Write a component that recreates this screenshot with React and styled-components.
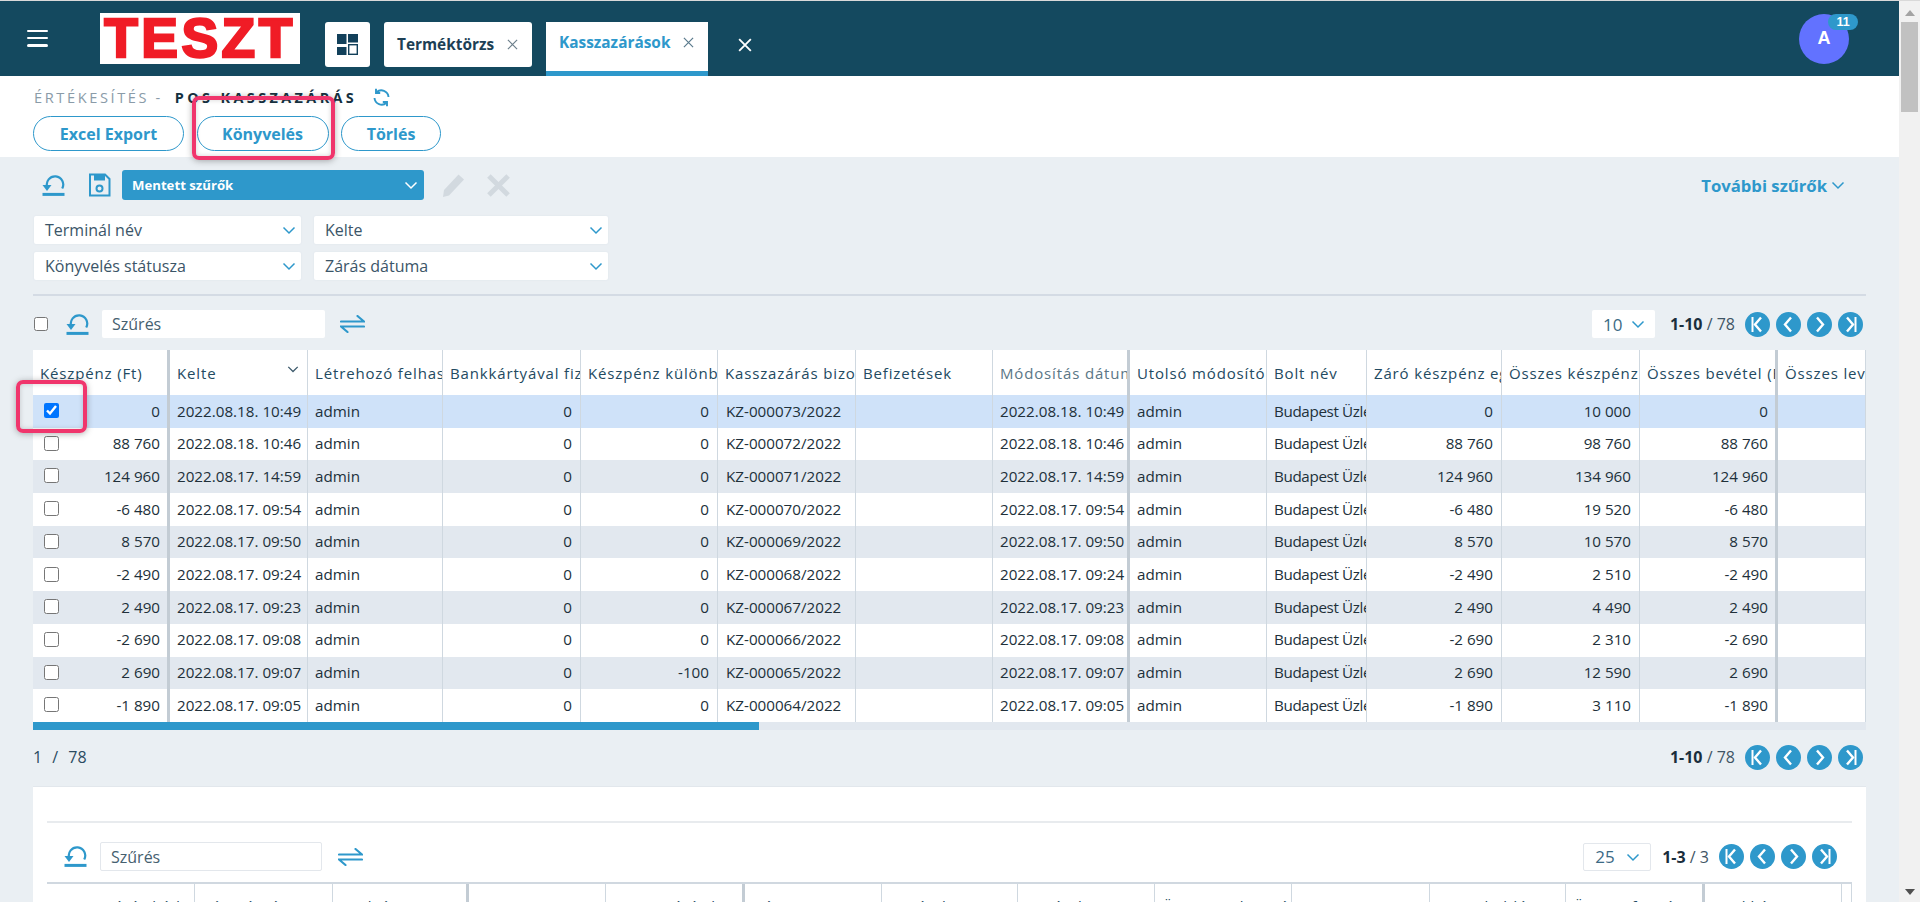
import React from "react";
import styled, { createGlobalStyle } from "styled-components";

const Global = createGlobalStyle`
  html, body { margin: 0; padding: 0; height: 902px; overflow: hidden; background: #eaeff3; }
  body { font-family: "Open Sans", "Noto Sans", sans-serif; color: #1d3f55; }
  * { box-sizing: border-box; }
`;
const BLUE = "#2e98cb";

const Page = styled.div`display: flex; width: 1920px; height: 902px; position: relative; border-top: 1px solid #d9d9d9; overflow: hidden;`;
const Main = styled.div`width: 1899px; height: 901px; display: flex; flex-direction: column; overflow: hidden;`;
const Rail = styled.div`width: 21px; background: #f1f1f1; display: flex; flex-direction: column; align-items: center; padding-top: 9px; padding-bottom: 7px;`;
const RailArrow = styled.div`
  width: 0; height: 0; border-left: 5px solid transparent; border-right: 5px solid transparent;
  ${p => p.$down ? "border-top: 6px solid #505050; margin-top: auto;" : "border-bottom: 6px solid #a3a3a3;"}
`;
const RailThumb = styled.div`width: 17px; height: 90px; background: #c1c1c1; margin-top: 6px;`;

const Header = styled.header`height: 75px; flex: none; background: #14495f; display: flex; align-items: center; padding: 0 50px 0 27px;`;
const Burger = styled.button`width: 21px; height: 17px; padding: 0; border: 0; background: none; display: flex; flex-direction: column; justify-content: space-between; margin-top: -1px;
  span { display: block; height: 2.5px; background: #fff; border-radius: 2px; }`;
const Logo = styled.div`width: 200px; height: 51px; margin-left: 52px; background: #fff; display: flex; align-items: center; justify-content: center;
  color: #f01c26; font: 700 55px/51px "Liberation Sans", Arial, sans-serif; letter-spacing: 3.5px; -webkit-text-stroke: 2.4px #f01c26; overflow: hidden;`;
const TabBar = styled.nav`align-self: stretch; padding-top: 21px; margin-left: 25px; display: flex; align-items: flex-start; gap: 14px;`;
const DashBtn = styled.button`width: 45px; height: 45px; border: 0; padding: 0; background: #fff; border-radius: 3px; display: flex; align-items: center; justify-content: center;`;
const Tab = styled.div`
  height: ${p => p.$active ? "54px" : "45px"};
  padding-bottom: ${p => p.$active ? "9px" : "0"};
  width: ${p => p.$w}px; background: #fff; border-radius: ${p => p.$active ? "0" : "3px"};
  border-bottom: ${p => p.$active ? `5px solid ${BLUE}` : "0"};
  display: flex; align-items: center; justify-content: space-between; padding-left: 13px; padding-right: 14px;
  font-size: 15.4px; font-weight: 700; color: ${p => p.$active ? BLUE : "#1d3f55"};
  svg { flex: none; }
`;
const CloseAll = styled.button`width: 16px; height: 45px; border: 0; background: none; padding: 0; margin-left: 16px; display: flex; align-items: center;`;
const Avatar = styled.div`margin-left: auto; width: 50px; height: 50px; border-radius: 50%; background: #6272ff; color: #fff; font: 700 18px "Liberation Sans", sans-serif; display: flex; align-items: center; justify-content: center; position: relative;`;
const Badge = styled.span`position: absolute; left: 29px; top: 0; width: 30px; height: 16px; border-radius: 8px; background: ${BLUE}; font: 700 12.5px/16px "Liberation Sans", sans-serif; text-align: center;`;

const SubBar = styled.section`height: 81px; flex: none; background: #fff; padding: 10px 0 0 33px;`;
const Crumbs = styled.div`height: 22px; display: flex; align-items: center; margin-bottom: 8px; padding-left: 1px; white-space: nowrap;`;
const CrumbGrey = styled.span`font-size: 14.6px; letter-spacing: 2.6px; color: #8a9ba8; margin-right: 12px;`;
const CrumbDark = styled.span`font-size: 14.4px; font-weight: 700; letter-spacing: 3.4px; color: #14303f; margin-right: 15px;`;
const PillRow = styled.div`display: flex; gap: 12.5px;`;
const Pill = styled.button`width: ${p => p.$w}px; height: 35px; background: #fff; border: 1.5px solid ${BLUE}; border-radius: 18px; color: ${BLUE}; font: 700 16px "Open Sans", sans-serif; padding: 0;`;

const Filters = styled.section`flex: 1; padding: 13px 33px 0; display: flex; flex-direction: column;`;
const SavedRow = styled.div`height: 30px; flex: none; display: flex; align-items: center; padding-left: 9px;`;
const IconSlot = styled.span`display: inline-flex; margin-right: ${p => p.$mr ?? 0}px;`;
const SavedSelect = styled.div`width: 302px; height: 30px; background: ${BLUE}; border-radius: 3px; color: #fff; font-size: 13.2px; font-weight: 700; display: flex; align-items: center; justify-content: space-between; padding: 0 6px 0 10px; margin-right: 18px;`;
const More = styled.div`margin-left: auto; margin-right: 21px; display: flex; align-items: center; gap: 4px; color: ${BLUE}; font-size: 16.7px; font-weight: 700;`;
const SelectGrid = styled.div`display: grid; grid-template-columns: 267px 294px; column-gap: 13px; row-gap: 8px; margin-top: 16px; padding-left: 1px;`;
const Select = styled.div`height: 28px; background: #fff; border-radius: 2px; box-shadow: 0 0 2px #dde3e9; font-size: 16px; color: #3b5568; display: flex; align-items: center; justify-content: space-between; padding: 0 5px 0 11px;`;
const Divider = styled.hr`margin: 14px 0 0; border: 0; border-top: 2px solid #d4dbe4; height: 0;`;

const ListBar = styled.div`height: 28px; flex: none; margin-top: ${p => p.$mt}px; display: flex; align-items: center; padding-left: ${p => p.$pl}px; padding-right: ${p => p.$pr}px;`;
const Search = styled.div`width: ${p => p.$w ?? 223}px; height: ${p => p.$h ?? 28}px; background: #fff; border-radius: 2px; border: ${p => p.$line ? "1px solid #e3e7ec" : "0"}; font-size: 16px; color: #46606f; display: flex; align-items: center; padding-left: 10px; margin-right: ${p => p.$mr ?? 15}px;`;
const PagerWrap = styled.div`margin-left: auto; display: flex; align-items: center;`;
const PageSize = styled.div`width: ${p => p.$w}px; height: 28px; background: #fff; border-radius: 2px; ${p => p.$line && "border: 1px solid #e3e7ec;"} display: flex; align-items: center; justify-content: space-between; padding: 0 10px 0 11px; font-size: 17px; color: #3b6a85; margin-right: ${p => p.$mr ?? 15}px;`;
const Count = styled.div`font-size: 16px; color: #3f5565; margin-right: 10px; white-space: nowrap; b { color: #1a2e3c; font-weight: 700; }`;
const PageBtns = styled.div`display: flex; gap: 6px;`;
const RoundBtn = styled.button`width: 25px; height: 25px; border-radius: 50%; border: 0; padding: 0; background: ${BLUE}; display: flex; align-items: center; justify-content: center;`;

const Table = styled.div`background: #fff; flex: none; overflow: hidden; margin-top: ${p => p.$mt ?? 0}px;`;
const Row = styled.div`display: grid; grid-template-columns: ${p => p.$cols}; height: ${p => p.$h}px; background: ${p => p.$bg ?? "transparent"}; font-size: 15.2px; color: #21303a;`;
const HeadCell = styled.div`
  border-right: ${p => p.$thick ? "3px solid #c3ccd4" : "1px solid #cfd8e0"};
  padding-left: 7px; overflow: hidden; white-space: nowrap; display: flex; align-items: center; position: relative;
  font-size: 15px; letter-spacing: .85px; color: ${p => p.$muted ? "#5a7686" : "#234a61"};
`;
const Cell = styled.div`
  border-right: ${p => p.$thick ? "3px solid #c3ccd4" : "1px solid #cfd8e0"};
  padding: 0 ${p => p.$right ? (p.$thick ? 7 : 8) : 0}px 1.5px ${p => p.$right ? 0 : p.$pl ?? 7}px; overflow: hidden; white-space: nowrap;
  letter-spacing: ${p => p.$tight ? "-.35px" : "0"};
  display: flex; align-items: center; justify-content: ${p => p.$right ? "flex-end" : "flex-start"};
`;
const FirstCell = styled(Cell)`justify-content: space-between; padding-left: 11px;`;
const SortMark = styled.span`position: absolute; right: 8px; top: 13px; display: flex;`;
const Check = styled.input.attrs({ type: "checkbox" })`width: ${p => p.$s ?? 15}px; height: ${p => p.$s ?? 15}px; margin: 0; flex: none; accent-color: #0075ff;`;
const HScroll = styled.div`height: 8px; background: #e2e8ef; flex: none;`;
const HThumb = styled.div`height: 8px; width: 726px; background: ${BLUE};`;
const BottomBar = styled.div`height: 25px; flex: none; margin-top: 15px; display: flex; align-items: center; padding-right: 3px;`;
const PageOf = styled.div`font-size: 16px; color: #2a4b61; word-spacing: 6px;`;

const Card = styled.section`margin-top: 16px; flex: none; height: 120px; background: #fff; border-top: 1px solid #e2e7ec; padding: 34px 14px 0; overflow: hidden;`;
const CardRule = styled.hr`margin: 0; border: 0; border-top: 2px solid #e8ebee; height: 0;`;
const CardTable = styled.div`margin-top: 11px; border-top: 2px solid #d0d8e0;`;

const Mark = styled.div`position: absolute; left: ${p => p.$x}px; top: ${p => p.$y}px; width: ${p => p.$w}px; height: ${p => p.$h}px; border: 4px solid #f0356c; border-radius: 7px; box-shadow: 0 1px 6px rgba(60,60,60,.4), inset 0 0 5px rgba(60,60,60,.22); pointer-events: none;`;

const Chevron = ({ c = BLUE, s = 14 }) => (
  <svg width={s} height={s} viewBox="0 0 14 14" fill="none" stroke={c} strokeWidth="1.5"><path d="M1.5 4.5 7 10l5.5-5.5" /></svg>
);
const Cross = ({ c = "#6c7f8b", s = 11, w = 1.3 }) => (
  <svg width={s} height={s} viewBox="0 0 12 12" fill="none" stroke={c} strokeWidth={w}><path d="M1 1l10 10M11 1 1 11" /></svg>
);
const ResetIcon = () => (
  <svg width="23" height="21" viewBox="0 0 23 21" fill="none" stroke={BLUE} strokeWidth="2.2">
    <path d="M5.2 12A8.2 8.2 0 1 1 20.2 13.5" />
    <path d="M0.5 10h9L5 16z" fill={BLUE} stroke="none" />
    <path d="M0.5 19.4h22" strokeWidth="3" />
  </svg>
);
const SaveIcon = () => (
  <svg width="23" height="24" viewBox="0 0 23 24" fill="none" stroke={BLUE} strokeWidth="2">
    <path d="M2 1.5h15l4.5 4.5v16.5H2z" />
    <path d="M6 1.5h11v6H6z" fill={BLUE} stroke="none" />
    <circle cx="11.5" cy="15.5" r="3" />
  </svg>
);
const Swap = ({ w = 25 }) => (
  <svg width={w} height="18" viewBox="0 0 25 18" fill="none" stroke={BLUE} strokeWidth="2.2" strokeLinecap="round">
    <path d="M1 6.5h23L17.5 1" />
    <path d="M24 11.5H1L7.5 17" />
  </svg>
);
const Refresh = () => (
  <svg width="19" height="19" viewBox="0 0 19 19" fill="none" stroke={BLUE} strokeWidth="1.9">
    <path d="M16.5 9A7.2 7.2 0 0 0 4.5 4.2" />
    <path d="M2.5 10A7.2 7.2 0 0 0 14.5 14.8" />
    <path d="M4 .8v4.2h4.2M15 18.2V14h-4.2" />
  </svg>
);
const Dash = () => (
  <svg width="21" height="21" viewBox="0 0 21 21" fill="#12405a">
    <rect x="0" y="0" width="9.5" height="10" />
    <rect x="11" y="0" width="10" height="8.5" />
    <rect x="0" y="13" width="9.5" height="8" />
    <rect x="11.7" y="10.7" width="8.6" height="9.6" fill="none" stroke="#12405a" strokeWidth="1.4" />
  </svg>
);
const Pencil = () => (
  <svg width="23" height="23" viewBox="0 0 23 23" fill="#d2d9df"><path d="M16.5 0.5 22 5.5 7 21.5 1 23 2 16z" /></svg>
);
const PageIcon = ({ d, bar }) => (
  <svg width="25" height="25" viewBox="0 0 25 25" fill="none" stroke="#fff" strokeWidth="2.4">
    <path d={d} />
    {bar && <path d={bar} strokeWidth="2" />}
  </svg>
);
const Pager = () => (
  <PageBtns>
    <RoundBtn><PageIcon d="M16 5.5 10 12.5l6 7" bar="M7.5 5v15" /></RoundBtn>
    <RoundBtn><PageIcon d="M15 5.5 9 12.5l6 7" /></RoundBtn>
    <RoundBtn><PageIcon d="M10 5.5l6 7-6 7" /></RoundBtn>
    <RoundBtn><PageIcon d="M9 5.5l6 7-6 7" bar="M17.5 5v15" /></RoundBtn>
  </PageBtns>
);

const gridOf = a => a.map(n => `${n}px`).join(" ");
const COLS = gridOf([137, 138, 135, 138, 137, 138, 137, 137, 137, 100, 135, 138, 138, 88]);
const THICK = [0, 7, 12];
const HEADS = ["Készpénz (Ft)", "Kelte", "Létrehozó felhasználó", "Bankkártyával fizetett", "Készpénz különbözet", "Kasszazárás bizonylat", "Befizetések", "Módosítás dátuma", "Utolsó módosító", "Bolt név", "Záró készpénz egyenleg", "Összes készpénz (Ft)", "Összes bevétel (Ft)", "Összes levonás"];
const DATA = [
  ["0", "2022.08.18. 10:49", "0", "KZ-000073/2022", "10 000"],
  ["88 760", "2022.08.18. 10:46", "0", "KZ-000072/2022", "98 760"],
  ["124 960", "2022.08.17. 14:59", "0", "KZ-000071/2022", "134 960"],
  ["-6 480", "2022.08.17. 09:54", "0", "KZ-000070/2022", "19 520"],
  ["8 570", "2022.08.17. 09:50", "0", "KZ-000069/2022", "10 570"],
  ["-2 490", "2022.08.17. 09:24", "0", "KZ-000068/2022", "2 510"],
  ["2 490", "2022.08.17. 09:23", "0", "KZ-000067/2022", "4 490"],
  ["-2 690", "2022.08.17. 09:08", "0", "KZ-000066/2022", "2 310"],
  ["2 690", "2022.08.17. 09:07", "-100", "KZ-000065/2022", "12 590"],
  ["-1 890", "2022.08.17. 09:05", "0", "KZ-000064/2022", "3 110"],
];
const COLS2 = gridOf([148, 138, 136, 137, 139, 137, 136, 137, 137, 138, 136, 139, 137, 10]);
const THICK2 = [2, 4, 11];
const HEADS2 = ["Kasszazárás kódja", "Pénztárgép", "Utolsó", "Bizt", "Kasszazárás bizonylat", "Dátum", "Bevétel", "Bevétel összege", "Összesen bruttó", "Fizetett", "Visszaküldés", "Összes fizetés", "Bankkártya", "+"];

const rowBg = i => (i === 0 ? "#cfe2f9" : i % 2 === 0 ? "#e2e8ef" : "#fff");

export default function App() {
  return (
    <>
      <Global />
      <Page>
        <Main>
          <Header>
            <Burger aria-label="menu"><span /><span /><span /></Burger>
            <Logo>TESZT</Logo>
            <TabBar>
              <DashBtn aria-label="dashboard"><Dash /></DashBtn>
              <Tab $w={148}>Terméktörzs <Cross /></Tab>
              <Tab $w={162} $active>Kasszazárások <Cross c="#5a7a8c" /></Tab>
              <CloseAll aria-label="close"><Cross c="#fff" s={14} w={1.6} /></CloseAll>
            </TabBar>
            <Avatar>A<Badge>11</Badge></Avatar>
          </Header>

          <SubBar>
            <Crumbs>
              <CrumbGrey>ÉRTÉKESÍTÉS -</CrumbGrey>
              <CrumbDark>POS KASSZAZÁRÁS</CrumbDark>
              <Refresh />
            </Crumbs>
            <PillRow>
              <Pill $w={151}>Excel Export</Pill>
              <Pill $w={132}>Könyvelés</Pill>
              <Pill $w={100}>Törlés</Pill>
            </PillRow>
          </SubBar>

          <Filters>
            <SavedRow>
              <IconSlot $mr={23}><ResetIcon /></IconSlot>
              <IconSlot $mr={11}><SaveIcon /></IconSlot>
              <SavedSelect>Mentett szűrők <Chevron c="#fff" /></SavedSelect>
              <IconSlot $mr={22}><Pencil /></IconSlot>
              <Cross c="#d2d9df" s={23} w={2.6} />
              <More>További szűrők <Chevron /></More>
            </SavedRow>
            <SelectGrid>
              <Select>Terminál név <Chevron /></Select>
              <Select>Kelte <Chevron /></Select>
              <Select>Könyvelés státusza <Chevron /></Select>
              <Select>Zárás dátuma <Chevron /></Select>
            </SelectGrid>
            <Divider />

            <ListBar $mt={14} $pl={1} $pr={3}>
              <IconSlot $mr={18}><Check $s={14} /></IconSlot>
              <IconSlot $mr={13}><ResetIcon /></IconSlot>
              <Search>Szűrés</Search>
              <Swap />
              <PagerWrap>
                <PageSize $w={63}>10 <Chevron /></PageSize>
                <Count><b>1-10</b> / 78</Count>
                <Pager />
              </PagerWrap>
            </ListBar>

            <Table $mt={12}>
              <Row $cols={COLS} $h={45}>
                {HEADS.map((h, i) => (
                  <HeadCell key={h} $thick={THICK.includes(i)} $muted={i === 7}>
                    {h}
                    {i === 1 && <SortMark><Chevron c="#3d5a6c" s={12} /></SortMark>}
                  </HeadCell>
                ))}
              </Row>
              {DATA.map((r, i) => (
                <Row key={r[3]} $cols={COLS} $h={32.7} $bg={rowBg(i)}>
                  <FirstCell $right $thick><Check defaultChecked={i === 0} />{r[0]}</FirstCell>
                  <Cell>{r[1]}</Cell>
                  <Cell>admin</Cell>
                  <Cell $right>0</Cell>
                  <Cell $right>{r[2]}</Cell>
                  <Cell $pl={8}>{r[3]}</Cell>
                  <Cell />
                  <Cell $thick>{r[1]}</Cell>
                  <Cell>admin</Cell>
                  <Cell $tight>Budapest Üzlet</Cell>
                  <Cell $right>{r[0]}</Cell>
                  <Cell $right>{r[4]}</Cell>
                  <Cell $right $thick>{r[0]}</Cell>
                  <Cell />
                </Row>
              ))}
              <HScroll><HThumb /></HScroll>
            </Table>

            <BottomBar>
              <PageOf>1 / 78</PageOf>
              <PagerWrap>
                <Count><b>1-10</b> / 78</Count>
                <Pager />
              </PagerWrap>
            </BottomBar>

            <Card>
              <CardRule />
              <ListBar $mt={20} $pl={17} $pr={15}>
                <IconSlot $mr={13}><ResetIcon /></IconSlot>
                <Search $w={222} $h={29} $mr={16} $line>Szűrés</Search>
                <Swap />
                <PagerWrap>
                  <PageSize $w={68} $mr={11} $line>25 <Chevron /></PageSize>
                  <Count><b>1-3</b> / 3</Count>
                  <Pager />
                </PagerWrap>
              </ListBar>
              <CardTable>
                <Row $cols={COLS2} $h={45}>
                  {HEADS2.map((h, i) => (
                    <HeadCell key={h} $thick={THICK2.includes(i)}>{h}</HeadCell>
                  ))}
                </Row>
              </CardTable>
            </Card>
          </Filters>
        </Main>
        <Rail>
          <RailArrow />
          <RailThumb />
          <RailArrow $down />
        </Rail>
        <Mark $x={192} $y={95} $w={143} $h={64} />
        <Mark $x={16} $y={379} $w={71} $h={53} />
      </Page>
    </>
  );
}
